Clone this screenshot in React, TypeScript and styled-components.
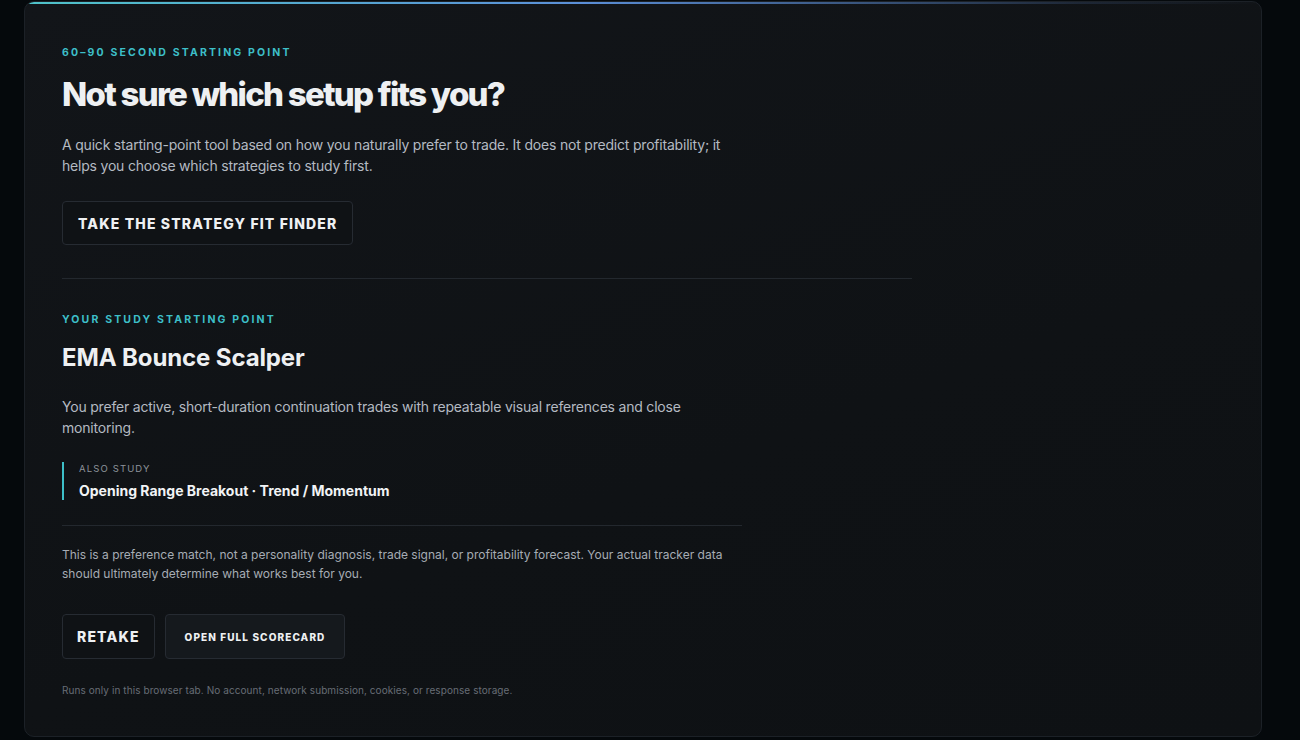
import React from 'react';
import styled, { createGlobalStyle } from 'styled-components';

const GlobalStyle = createGlobalStyle`
  html, body {
    margin: 0;
    padding: 0;
    background: #05090c;
    font-family: Inter, "Noto Sans", "Liberation Sans", sans-serif;
    -webkit-font-smoothing: antialiased;
  }
`;

const Page = styled.div`
  padding: 1px 38px 3px 24px;
  min-height: 736px;
  box-sizing: border-box;
`;

const Card = styled.section`
  position: relative;
  box-sizing: border-box;
  width: 1238px;
  min-height: 736px;
  padding: 44px 37px 38px;
  border: 1px solid #1c2127;
  border-radius: 10px;
  background: linear-gradient(160deg, #121519 0%, #0f1215 60%, #0e1114 100%);
  overflow: hidden;

  &::before {
    content: '';
    position: absolute;
    top: 0;
    left: 0;
    right: 0;
    height: 2px;
    background: linear-gradient(90deg, #4fc3c9 0%, #5b8fd8 45%, rgba(70, 100, 150, 0.25) 85%, transparent 100%);
  }
`;

const Inner = styled.div`
  max-width: 850px;
`;

const Eyebrow = styled.div`
  font-size: 10.5px;
  line-height: 14px;
  font-weight: 700;
  letter-spacing: 2.15px;
  text-transform: uppercase;
  color: #3dbfc8;
`;

const Headline = styled.h2`
  margin: 16px 0 0;
  font-size: 33px;
  line-height: 37px;
  font-weight: 800;
  letter-spacing: -0.053em;
  color: #eef0f2;
`;

const Lead = styled.p`
  margin: 21px 0 0;
  max-width: 680px;
  font-size: 14px;
  line-height: 21px;
  letter-spacing: -0.2px;
  color: #b4bac2;
`;

const Button = styled.button<{ $small?: boolean; $filled?: boolean }>`
  box-sizing: border-box;
  height: 45px;
  padding: 0 ${p => (p.$small ? '19px' : '14px')};
  border: 1px solid #262b32;
  border-radius: 4px;
  background: ${p => (p.$filled ? '#15191d' : '#0f1215')};
  color: #eef0f2;
  font-family: inherit;
  font-size: ${p => (p.$small ? '10px' : '14px')};
  font-weight: 800;
  letter-spacing: ${p => (p.$small ? '1.1px' : '1.15px')};
  text-transform: uppercase;
  cursor: pointer;
`;

const FinderButton = styled(Button)`
  margin-top: 25px;
  height: 44px;
  padding: 0 15px;
`;

const Divider = styled.hr<{ $width?: number }>`
  margin: ${p => (p.$width ? '25px 0 0' : '33px 0 0')};
  max-width: ${p => (p.$width ? `${p.$width}px` : 'none')};
  border: 0;
  border-top: 1px solid #23282e;
`;

const Result = styled.div`
  margin-top: 34px;
`;

const ResultTitle = styled.h3`
  margin: 16px 0 0;
  font-size: 24px;
  line-height: 30px;
  font-weight: 700;
  letter-spacing: -0.005em;
  color: #eef0f2;
`;

const ResultText = styled(Lead)`
  margin-top: 23px;
`;

const AlsoBlock = styled.div`
  margin-top: 24px;
  padding: 1px 0 0 15px;
  border-left: 2px solid #3dbfc8;
  display: flex;
  flex-direction: column;
  gap: 6px;
`;

const AlsoLabel = styled.div`
  font-size: 9.5px;
  line-height: 12px;
  letter-spacing: 0.12em;
  text-transform: uppercase;
  color: #8d939b;
`;

const AlsoValue = styled.div`
  font-size: 14px;
  line-height: 19px;
  font-weight: 700;
  letter-spacing: 0;
  color: #f1f3f5;
`;

const Disclaimer = styled.p`
  margin: 19px 0 0;
  max-width: 680px;
  font-size: 12px;
  line-height: 19px;
  letter-spacing: 0;
  color: #a6acb4;
`;

const Actions = styled.div`
  margin-top: 31px;
  display: flex;
  gap: 10px;
`;

const Footnote = styled.p`
  margin: 24px 0 0;
  font-size: 10px;
  line-height: 14px;
  letter-spacing: 0.08px;
  color: #676d75;
`;

export default function App() {
  return (
    <>
      <GlobalStyle />
      <Page>
        <Card>
          <Inner>
            <Eyebrow>60–90 second starting point</Eyebrow>
            <Headline>Not sure which setup fits you?</Headline>
            <Lead>
              A quick starting-point tool based on how you naturally prefer to trade. It does not predict
              profitability; it helps you choose which strategies to study first.
            </Lead>
            <FinderButton>Take the Strategy Fit Finder</FinderButton>
            <Divider />
            <Result>
              <Eyebrow>Your study starting point</Eyebrow>
              <ResultTitle>EMA Bounce Scalper</ResultTitle>
              <ResultText>
                You prefer active, short-duration continuation trades with repeatable visual references and close
                monitoring.
              </ResultText>
              <AlsoBlock>
                <AlsoLabel>Also study</AlsoLabel>
                <AlsoValue>Opening Range Breakout · Trend / Momentum</AlsoValue>
              </AlsoBlock>
              <Divider $width={680} />
              <Disclaimer>
                This is a preference match, not a personality diagnosis, trade signal, or profitability forecast. Your
                actual tracker data should ultimately determine what works best for you.
              </Disclaimer>
              <Actions>
                <Button>Retake</Button>
                <Button $small $filled>Open full scorecard</Button>
              </Actions>
              <Footnote>
                Runs only in this browser tab. No account, network submission, cookies, or response storage.
              </Footnote>
            </Result>
          </Inner>
        </Card>
      </Page>
    </>
  );
}
